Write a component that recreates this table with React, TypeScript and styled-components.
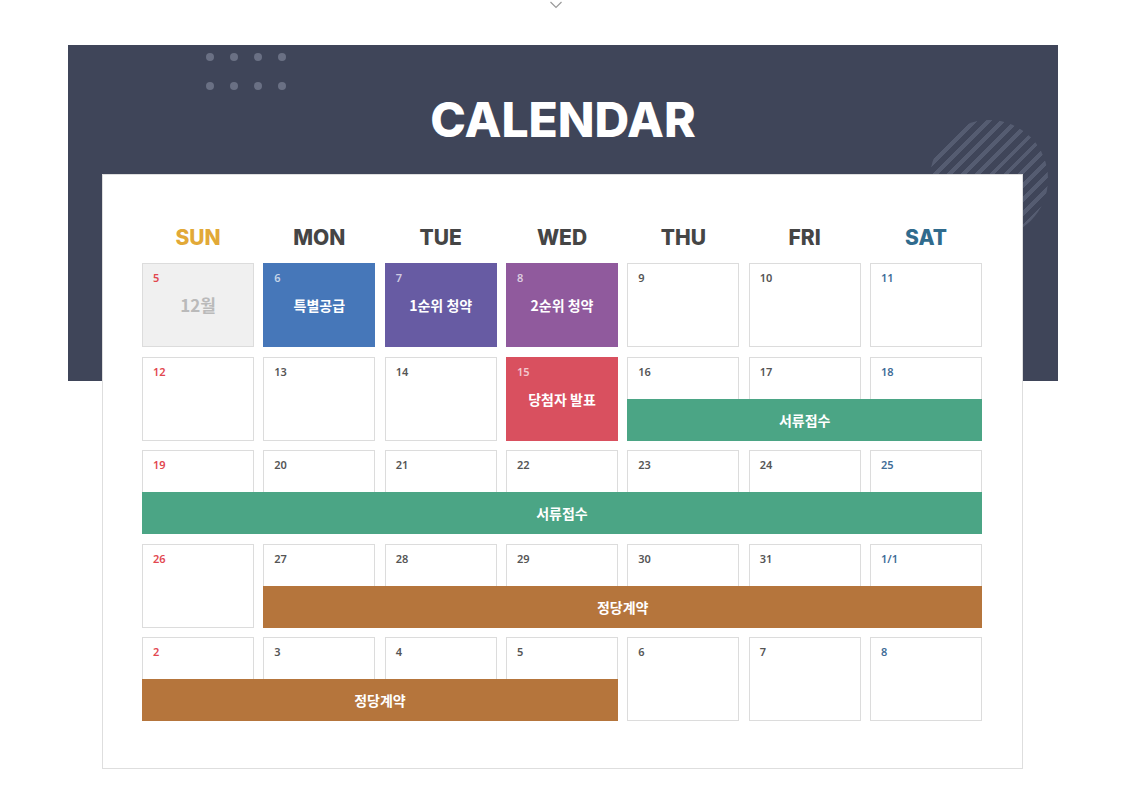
import React from 'react';
import styled, { createGlobalStyle } from 'styled-components';

type Tone = 'plain' | 'gray' | 'blue' | 'purple' | 'violet' | 'red';
type Kind = 'sun' | 'sat' | 'day';

interface IDay {
    num: string;
    tone?: Tone;
    label?: string;
}

interface IBar {
    from: number;
    to: number;
    color: string;
    label: string;
}

interface IWeek {
    days: IDay[];
    bar?: IBar;
}

const GREEN = '#4ba585';
const BROWN = '#b5753c';

const toneBg: { [key in Tone]: string } = {
    plain: '#ffffff',
    gray: '#f0f0f0',
    blue: '#4677b9',
    purple: '#675ba3',
    violet: '#905a9d',
    red: '#d9505f',
};

const GlobalStyle = createGlobalStyle`
    html, body {
        margin: 0;
        padding: 0;
        background: #ffffff;
        overflow: hidden;
    }
    body {
        font-family: "Noto Sans", "Noto Sans CJK KR", sans-serif;
    }
`;

const Page = styled.div`
    width: 990px;
    margin-left: 68px;
`;

const TopArrow = styled.div`
    display: flex;
    justify-content: center;
    height: 45px;
    margin-left: -14px;
`;

const Banner = styled.div`
    position: relative;
    height: 336px;
    background: #3f4559;
    overflow: hidden;
    box-sizing: border-box;
    padding-top: 51px;
`;

const Title = styled.h1`
    margin: 0;
    text-align: center;
    font-family: Inter, "Noto Sans", sans-serif;
    font-weight: 800;
    font-size: 48px;
    line-height: 48px;
    color: #ffffff;
`;

const Dots = styled.div`
    position: absolute;
    left: 138px;
    top: 8px;
    display: grid;
    grid-template-columns: repeat(4, 8px);
    column-gap: 16px;
    row-gap: 21px;
`;

const Dot = styled.span`
    width: 8px;
    height: 8px;
    border-radius: 50%;
    background: #6a7084;
`;

const StripeCircle = styled.div`
    position: absolute;
    left: 862px;
    top: 75px;
    width: 118px;
    height: 118px;
    border-radius: 50%;
    background: repeating-linear-gradient(135deg, #555c71 0 4px, transparent 4px 10px);
`;

const Card = styled.div`
    position: relative;
    z-index: 1;
    margin: -207px 35px 0 34px;
    background: #ffffff;
    border: 1px solid #dedede;
    padding: 49px 40px 47px 39px;
`;

const HeadRow = styled.div`
    display: grid;
    grid-template-columns: repeat(7, 1fr);
    column-gap: 9.3px;
    margin-bottom: 11px;
`;

const HeadCell = styled.div<{ $kind: Kind }>`
    text-align: center;
    font-family: Inter, "Noto Sans", sans-serif;
    font-weight: 800;
    font-size: 21px;
    line-height: 28px;
    color: ${p => (p.$kind === 'sun' ? '#e2a937' : p.$kind === 'sat' ? '#306b8d' : '#454545')};
`;

const Weeks = styled.div`
    display: flex;
    flex-direction: column;
    gap: 9.5px;
`;

const WeekRow = styled.div`
    display: grid;
    grid-template-columns: repeat(7, 1fr);
    grid-template-rows: 42px 42px;
    column-gap: 9.3px;
`;

const Cell = styled.div<{ $tone: Tone }>`
    grid-row: 1 / 3;
    box-sizing: border-box;
    background: ${p => toneBg[p.$tone]};
    border: 1px solid ${p => (p.$tone === 'plain' || p.$tone === 'gray' ? '#dcdcdc' : toneBg[p.$tone])};
    padding: 7px 10px;
    display: flex;
    flex-direction: column;
`;

const DayNum = styled.div<{ $kind: Kind; $light: boolean }>`
    font-size: 11px;
    font-weight: 600;
    line-height: 14px;
    color: ${p =>
        p.$light
            ? 'rgba(255,255,255,0.7)'
            : p.$kind === 'sun'
            ? '#e2474f'
            : p.$kind === 'sat'
            ? '#3f6c97'
            : '#555555'};
`;

const CellLabel = styled.div<{ $gray: boolean }>`
    margin-top: 9px;
    text-align: center;
    font-family: "Noto Sans CJK KR", "Noto Sans", sans-serif;
    font-weight: 700;
    font-size: ${p => (p.$gray ? '17px' : '14px')};
    line-height: 22px;
    color: ${p => (p.$gray ? '#bababa' : '#ffffff')};
`;

const Bar = styled.div<{ $color: string }>`
    position: relative;
    z-index: 1;
    grid-row: 2;
    display: flex;
    align-items: center;
    justify-content: center;
    background: ${p => p.$color};
    font-family: "Noto Sans CJK KR", "Noto Sans", sans-serif;
    font-weight: 700;
    font-size: 14px;
    color: #ffffff;
`;

const heads = ['SUN', 'MON', 'TUE', 'WED', 'THU', 'FRI', 'SAT'];

const weeks: IWeek[] = [
    {
        days: [
            { num: '5', tone: 'gray', label: '12월' },
            { num: '6', tone: 'blue', label: '특별공급' },
            { num: '7', tone: 'purple', label: '1순위 청약' },
            { num: '8', tone: 'violet', label: '2순위 청약' },
            { num: '9' },
            { num: '10' },
            { num: '11' },
        ],
    },
    {
        days: [
            { num: '12' },
            { num: '13' },
            { num: '14' },
            { num: '15', tone: 'red', label: '당첨자 발표' },
            { num: '16' },
            { num: '17' },
            { num: '18' },
        ],
        bar: { from: 5, to: 8, color: GREEN, label: '서류접수' },
    },
    {
        days: ['19', '20', '21', '22', '23', '24', '25'].map(num => ({ num })),
        bar: { from: 1, to: 8, color: GREEN, label: '서류접수' },
    },
    {
        days: ['26', '27', '28', '29', '30', '31', '1/1'].map(num => ({ num })),
        bar: { from: 2, to: 8, color: BROWN, label: '정당계약' },
    },
    {
        days: ['2', '3', '4', '5', '6', '7', '8'].map(num => ({ num })),
        bar: { from: 1, to: 5, color: BROWN, label: '정당계약' },
    },
];

const kindOf = (i: number): Kind => (i === 0 ? 'sun' : i === 6 ? 'sat' : 'day');

const App = () => (
    <Page>
        <GlobalStyle />
        <TopArrow>
            <svg width="14" height="10" viewBox="0 0 14 10">
                <polyline points="1.5,2 7,7.5 12.5,2" fill="none" stroke="#9a9a9a" strokeWidth="1.2" />
            </svg>
        </TopArrow>
        <Banner>
            <Dots>
                {Array.from({ length: 8 }).map((_, i) => (
                    <Dot key={i} />
                ))}
            </Dots>
            <StripeCircle />
            <Title>CALENDAR</Title>
        </Banner>
        <Card>
            <HeadRow>
                {heads.map((h, i) => (
                    <HeadCell key={h} $kind={kindOf(i)}>
                        {h}
                    </HeadCell>
                ))}
            </HeadRow>
            <Weeks>
                {weeks.map((w, wi) => (
                    <WeekRow key={wi}>
                        {w.days.map((d, i) => {
                            const tone = d.tone || 'plain';
                            return (
                                <Cell key={i} $tone={tone} style={{ gridColumn: i + 1 }}>
                                    <DayNum $kind={kindOf(i)} $light={tone !== 'plain' && tone !== 'gray'}>
                                        {d.num}
                                    </DayNum>
                                    {d.label && <CellLabel $gray={tone === 'gray'}>{d.label}</CellLabel>}
                                </Cell>
                            );
                        })}
                        {w.bar && (
                            <Bar $color={w.bar.color} style={{ gridColumn: `${w.bar.from} / ${w.bar.to}` }}>
                                {w.bar.label}
                            </Bar>
                        )}
                    </WeekRow>
                ))}
            </Weeks>
        </Card>
    </Page>
);

export default App;
